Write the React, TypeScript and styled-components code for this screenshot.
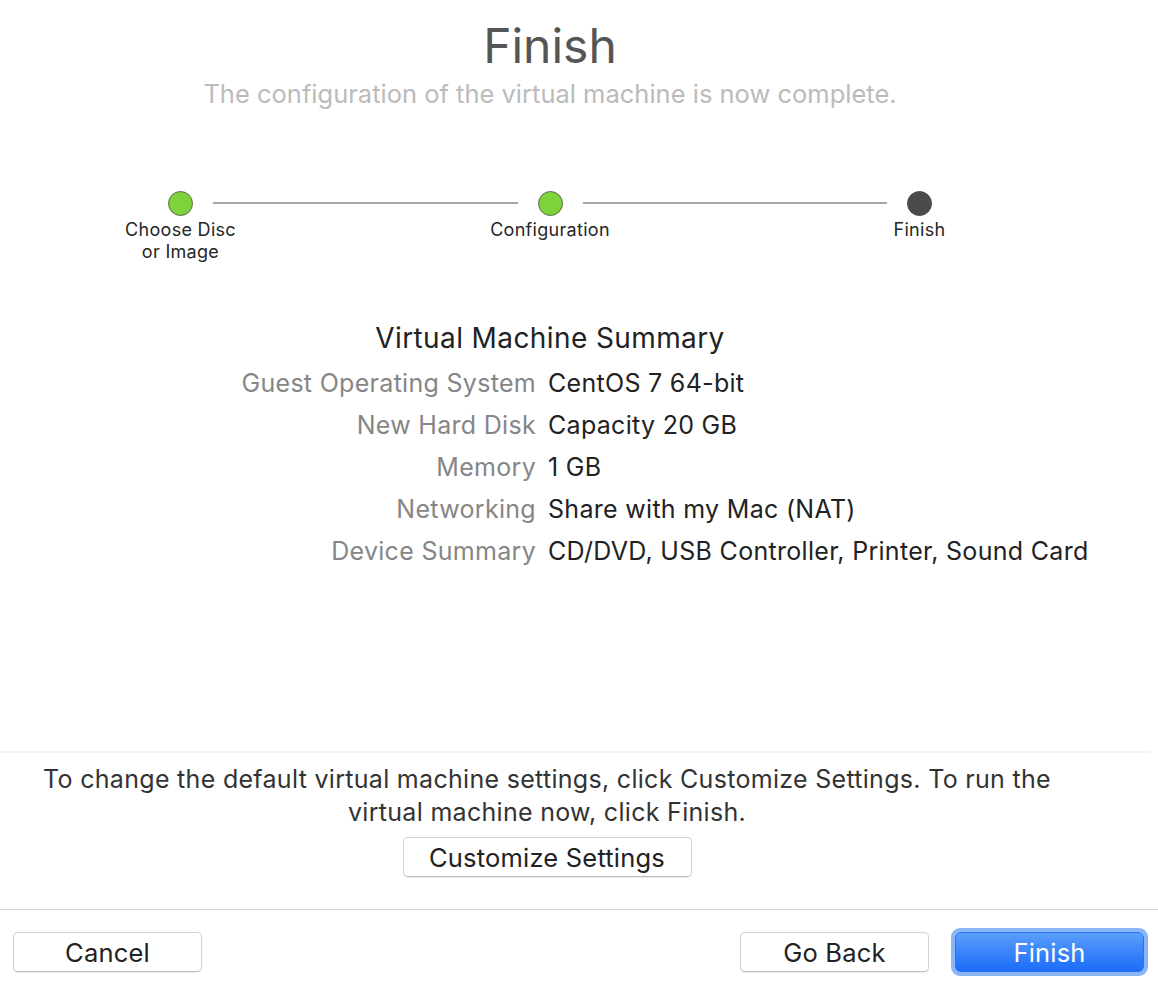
import React from 'react';
import styled, { createGlobalStyle } from 'styled-components';

const GlobalStyle = createGlobalStyle`
  html, body {
    margin: 0;
    padding: 0;
    background: #ffffff;
  }
  body {
    font-family: 'Inter', 'Liberation Sans', sans-serif;
    -webkit-font-smoothing: antialiased;
  }
`;

// #region -- Styled components
const Window = styled.div`
  width: 1158px;
  height: 986px;
  display: flex;
  flex-direction: column;
  background: #ffffff;
  overflow: hidden;
`;
Window.displayName = 'Window';

const Content = styled.main`
  width: 1100px;
  flex: 1;
  display: flex;
  flex-direction: column;
`;
Content.displayName = 'Content';

const Header = styled.header`
  display: flex;
  flex-direction: column;
  align-items: center;
  padding-top: 16px;
`;
Header.displayName = 'Header';

const Title = styled.h1`
  margin: 0;
  font-size: 48px;
  line-height: 60px;
  font-weight: 400;
  color: #555555;
`;
Title.displayName = 'Title';

const Subtitle = styled.p`
  margin: 0;
  font-size: 25.5px;
  line-height: 36px;
  color: #bbbbbb;
`;
Subtitle.displayName = 'Subtitle';

const Stepper = styled.div`
  width: 804px;
  margin: 78px auto 0;
  display: grid;
  grid-template-columns: 65px 1fr 65px 1fr 65px;
  grid-template-rows: 26px auto;
  align-items: center;
`;
Stepper.displayName = 'Stepper';

const Dot = styled.div<{ $done: boolean }>`
  justify-self: center;
  width: 25px;
  height: 25px;
  box-sizing: border-box;
  border-radius: 50%;
  background: ${(p) => (p.$done ? '#7ed23a' : '#4a4a4a')};
  border: 1px solid ${(p) => (p.$done ? '#5c6b52' : '#4a4a4a')};
`;
Dot.displayName = 'Dot';

const Track = styled.div`
  height: 2px;
  background: #a6a6a6;
`;
Track.displayName = 'Track';

const StepLabel = styled.div<{ $col: number }>`
  grid-column: ${(p) => p.$col};
  grid-row: 2;
  justify-self: center;
  align-self: start;
  white-space: nowrap;
  text-align: center;
  font-size: 18px;
  letter-spacing: 0.3px;
  line-height: 22px;
  color: #262626;
  padding-top: 3px;
`;
StepLabel.displayName = 'StepLabel';

const Summary = styled.section`
  margin-top: 55px;
  display: flex;
  flex-direction: column;
`;
Summary.displayName = 'Summary';

const SummaryTitle = styled.h2`
  margin: 0 0 10px;
  align-self: center;
  font-size: 28px;
  letter-spacing: 0.4px;
  line-height: 40px;
  font-weight: 400;
  color: #222222;
`;
SummaryTitle.displayName = 'SummaryTitle';

const SummaryGrid = styled.dl`
  margin: 0;
  display: grid;
  grid-template-columns: 536px auto;
  column-gap: 12px;
  row-gap: 12px;
  font-size: 25px;
  letter-spacing: 0.3px;
  line-height: 30px;
`;
SummaryGrid.displayName = 'SummaryGrid';

const Key = styled.dt`
  text-align: right;
  color: #868686;
`;
Key.displayName = 'Key';

const Value = styled.dd`
  margin: 0;
  color: #222222;
  white-space: nowrap;
`;
Value.displayName = 'Value';

const Spacer = styled.div`
  flex: 1;
`;
Spacer.displayName = 'Spacer';

const Divider = styled.hr<{ $light?: boolean }>`
  margin: 0;
  border: none;
  height: ${(p) => (p.$light ? '2px' : '1px')};
  background: ${(p) => (p.$light ? '#f3f3f3' : '#d4d4d4')};
  width: ${(p) => (p.$light ? '1150px' : '100%')};
`;
Divider.displayName = 'Divider';

const Customize = styled.section`
  display: flex;
  flex-direction: column;
  align-items: center;
  padding: 10px 6px 32px 0;
`;
Customize.displayName = 'Customize';

const Note = styled.p`
  margin: 0 0 8px;
  width: 1030px;
  text-align: center;
  font-size: 25px;
  letter-spacing: 0.3px;
  line-height: 33px;
  color: #333333;
`;
Note.displayName = 'Note';

const Button = styled.button<{ $width: number }>`
  width: ${(p) => p.$width}px;
  height: 40px;
  box-sizing: border-box;
  border: 1px solid #d2d2d2;
  border-bottom-color: #bcbcbc;
  border-radius: 5px;
  background: #ffffff;
  box-shadow: 0 1px 1px rgba(0, 0, 0, 0.08);
  font-family: inherit;
  font-size: 25.5px;
  letter-spacing: 0.2px;
  color: #222222;
  padding: 0;
  cursor: pointer;
`;
Button.displayName = 'Button';

const PrimaryButton = styled(Button)`
  border: 1px solid #2a74f0;
  background: linear-gradient(#5a9ffb, #1b6cf9);
  color: #ffffff;
  box-shadow: 0 0 0 4px #8ab6f7;
`;
PrimaryButton.displayName = 'PrimaryButton';

const Footer = styled.footer`
  display: flex;
  align-items: center;
  gap: 26px;
  padding: 22px 14px 14px 13px;
`;
Footer.displayName = 'Footer';
// #endregion

const steps = [
  { label: 'Choose Disc\nor Image', done: true },
  { label: 'Configuration', done: true },
  { label: 'Finish', done: false },
];

const summary = [
  ['Guest Operating System', 'CentOS 7 64-bit'],
  ['New Hard Disk', 'Capacity 20 GB'],
  ['Memory', '1 GB'],
  ['Networking', 'Share with my Mac (NAT)'],
  ['Device Summary', 'CD/DVD, USB Controller, Printer, Sound Card'],
];

function App() {
  return (
    <Window>
      <GlobalStyle />
      <Content>
        <Header>
          <Title>Finish</Title>
          <Subtitle>The configuration of the virtual machine is now complete.</Subtitle>
        </Header>

        <Stepper>
          <Dot $done={steps[0].done} />
          <Track />
          <Dot $done={steps[1].done} />
          <Track />
          <Dot $done={steps[2].done} />
          {steps.map((s, i) => (
            <StepLabel key={s.label} $col={i * 2 + 1}>
              {s.label.split('\n').map((line) => (
                <div key={line}>{line}</div>
              ))}
            </StepLabel>
          ))}
        </Stepper>

        <Summary>
          <SummaryTitle>Virtual Machine Summary</SummaryTitle>
          <SummaryGrid>
            {summary.map(([k, v]) => (
              <React.Fragment key={k}>
                <Key>{k}</Key>
                <Value>{v}</Value>
              </React.Fragment>
            ))}
          </SummaryGrid>
        </Summary>

        <Spacer />
        <Divider $light />
        <Customize>
          <Note>
            To change the default virtual machine settings, click Customize Settings. To run the
            virtual machine now, click Finish.
          </Note>
          <Button $width={289}>Customize Settings</Button>
        </Customize>
      </Content>
      <Divider />
      <Footer>
        <Button $width={189}>Cancel</Button>
        <Spacer />
        <Button $width={189}>Go Back</Button>
        <PrimaryButton $width={189}>Finish</PrimaryButton>
      </Footer>
    </Window>
  );
}

export default App;
